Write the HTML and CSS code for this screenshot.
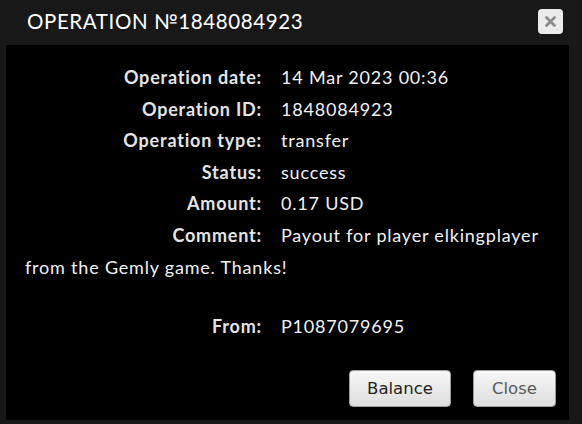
FILE: index.html
```html
<!DOCTYPE html>
<html>
<head>
    <title>Operation</title>
    <link rel="stylesheet" href="styles.css">
</head>
<body>
    <div class="dialog">
        <div class="titlebar">
            <span class="title">OPERATION №1848084923</span>
            <button class="close-x" title="Close">
                <svg width="11" height="11" viewBox="0 0 11 11"><path d="M1.5 1.5 L9.5 9.5 M9.5 1.5 L1.5 9.5" stroke="#8a8a8a" stroke-width="2.6" stroke-linecap="round"/></svg>
            </button>
        </div>
        <div class="content">
            <div class="info">
                <div class="row"><span class="label">Operation date:</span>14 Mar 2023 00:36</div>
                <div class="row"><span class="label">Operation ID:</span>1848084923</div>
                <div class="row"><span class="label">Operation type:</span>transfer</div>
                <div class="row"><span class="label">Status:</span>success</div>
                <div class="row"><span class="label">Amount:</span>0.17 USD</div>
                <div class="row"><span class="label">Comment:</span>Payout for player elkingplayer from the Gemly game. Thanks!</div>
                <div class="row blank">&nbsp;</div>
                <div class="row"><span class="label">From:</span>P1087079695</div>
            </div>
            <div class="buttons">
                <button class="btn">Balance</button>
                <button class="btn btn-close">Close</button>
            </div>
        </div>
    </div>
</body>
</html>
```

FILE: styles.css
```css
html, body {
    margin: 0;
    padding: 0;
    height: 100%;
}

body {
    background-color: #181818;
    font-family: "Lato", "Open Sans", sans-serif;
}

.dialog {
    display: flex;
    flex-direction: column;
    height: 420px;
}

.titlebar {
    height: 45px;
    display: flex;
    align-items: center;
    justify-content: space-between;
    padding: 0 19px 0 27px;
}

.title {
    color: #fff;
    font-family: "Lato", sans-serif;
    font-size: 20.5px;
    letter-spacing: 0.6px;
    margin-top: -4px;
}

.close-x {
    width: 25px;
    height: 25px;
    margin-top: -2px;
    padding: 0;
    border: none;
    border-radius: 4px;
    background-color: #ebebeb;
    display: flex;
    align-items: center;
    justify-content: center;
}

.content {
    flex: 1;
    margin: 0 13px 0 6px;
    background-color: #000;
    display: flex;
    flex-direction: column;
    justify-content: space-between;
}

.info {
    padding: 17px 19px 0 19px;
    color: #f2f2f2;
    font-size: 18px;
    letter-spacing: 0.8px;
    line-height: 31.6px;
}

.label {
    display: inline-block;
    width: 237px;
    margin-right: 19px;
    text-align: right;
    font-weight: bold;
    color: #e4e4e4;
}

.blank {
    line-height: 28px;
}

.buttons {
    display: flex;
    justify-content: flex-end;
    gap: 22px;
    padding: 0 13px 13px 0;
}

.btn {
    height: 37px;
    width: 102px;
    border: 1px solid #9c9c9c;
    border-radius: 4px;
    background: linear-gradient(#f7f7f7, #dedede);
    font-family: "DejaVu Sans", Verdana, sans-serif;
    font-size: 16.5px;
    color: #1e1e1e;
    padding: 0;
}

.btn-close {
    width: 83px;
    color: #5a5a5a;
}
```
